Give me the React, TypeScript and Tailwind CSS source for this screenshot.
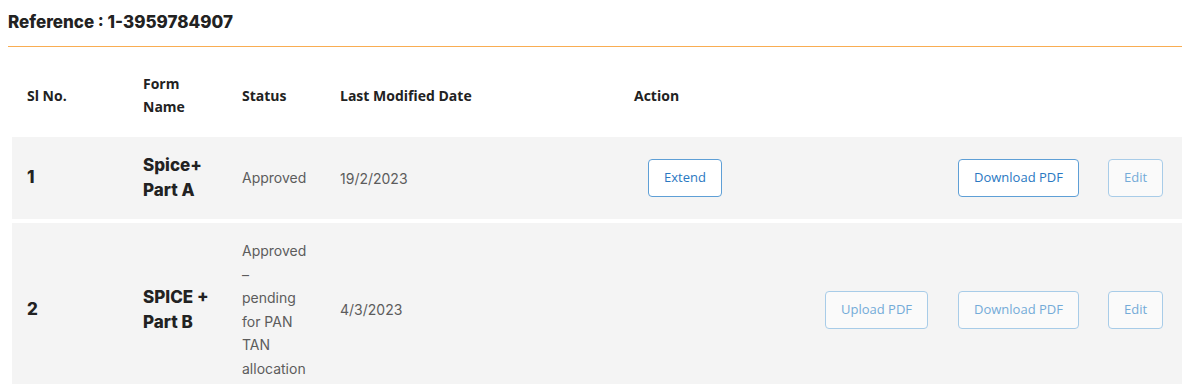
import React from 'react';

type Btn = { label: string; muted?: boolean } | null;

interface Row {
  no: string;
  form: string[];
  status: string[];
  date: string;
  actions: [Btn, Btn, Btn, Btn];
}

const rows: Row[] = [
  {
    no: '1',
    form: ['Spice+', 'Part A'],
    status: ['Approved'],
    date: '19/2/2023',
    actions: [{ label: 'Extend' }, null, { label: 'Download PDF' }, { label: 'Edit', muted: true }],
  },
  {
    no: '2',
    form: ['SPICE +', 'Part B'],
    status: ['Approved', '–', 'pending', 'for PAN', 'TAN', 'allocation'],
    date: '4/3/2023',
    actions: [
      null,
      { label: 'Upload PDF', muted: true },
      { label: 'Download PDF', muted: true },
      { label: 'Edit', muted: true },
    ],
  },
];

const poppins = { fontFamily: 'Inter, "Open Sans", sans-serif' };
const segoe = { fontFamily: '"Open Sans", "Liberation Sans", sans-serif' };

function ActionButton({ btn }: { btn: Btn }) {
  if (!btn) return <div />;
  return (
    <div>
      <button
        style={segoe}
        className={`h-[38px] px-[15px] rounded-[4px] border text-[13px] ${
          btn.muted
            ? 'border-[#a8cce8] text-[#74abd8] bg-[#fafafa]'
            : 'border-[#5e9fd6] text-[#2a78c2] bg-white'
        }`}
      >
        {btn.label}
      </button>
    </div>
  );
}

const cols = 'grid grid-cols-[116px_99px_98px_294px_29px_177px_133px_150px_54px_20px]';

export default function App() {
  return (
    <div className="w-[1200px] h-[384px] overflow-hidden bg-white">
      <div className="pl-2 pr-[18px]">
        <div className="pt-[10px] pb-[12px] border-b border-[#f9ad52]">
          <h2 style={poppins} className="text-[17px] font-extrabold text-[#222] leading-6">
            Reference : 1-3959784907
          </h2>
        </div>

        <div className="ml-1 mt-[25px]">
          {/* Header */}
          <div className={`${cols} items-center text-[14px] font-bold text-[#222] leading-[23px] pb-[19px]`} style={segoe}>
            <div className="pl-[15px]">Sl No.</div>
            <div className="pl-[15px] w-[70px]">Form Name</div>
            <div className="pl-[15px]">Status</div>
            <div className="pl-[15px]">Last Modified Date</div>
            <div className="col-span-5 pl-[15px]">Action</div>
            <div />
          </div>

          {rows.map((r) => (
            <div key={r.no} className={`${cols} items-center bg-[#f4f4f4] mb-[4px] py-[16px]`}>
              <div style={poppins} className="pl-[15px] text-[17px] font-extrabold text-[#222]">{r.no}</div>
              <div style={poppins} className="pl-[15px] text-[17px] font-extrabold text-[#222] leading-[25px]">
                {r.form.map((f) => (
                  <div key={f}>{f}</div>
                ))}
              </div>
              <div style={poppins} className="pl-[15px] text-[14px] text-[#5c5c5c] leading-[23.5px]">
                {r.status.map((s, i) => (
                  <div key={i}>{s}</div>
                ))}
              </div>
              <div style={poppins} className="pl-[15px] text-[14px] text-[#5c5c5c]">{r.date}</div>
              <div />
              {r.actions.map((a, i) => (
                <ActionButton key={i} btn={a} />
              ))}
              <div />
            </div>
          ))}
        </div>
      </div>
    </div>
  );
}
